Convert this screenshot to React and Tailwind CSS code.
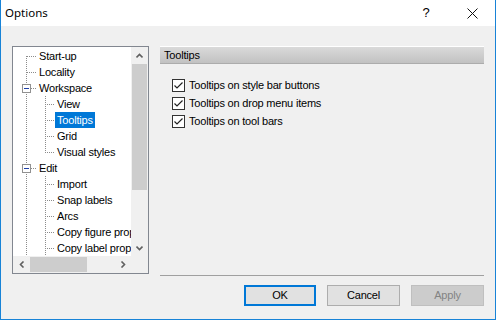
import React from "react";

const rows = [
  { label: "Start-up", level: 0, first: true },
  { label: "Locality", level: 0 },
  { label: "Workspace", level: 0, box: true },
  { label: "View", level: 1 },
  { label: "Tooltips", level: 1, selected: true },
  { label: "Grid", level: 1 },
  { label: "Visual styles", level: 1, last: true },
  { label: "Edit", level: 0, box: true },
  { label: "Import", level: 1 },
  { label: "Snap labels", level: 1 },
  { label: "Arcs", level: 1 },
  { label: "Copy figure prop", level: 1 },
  { label: "Copy label prop", level: 1 },
];

const options = [
  "Tooltips on style bar buttons",
  "Tooltips on drop menu items",
  "Tooltips on tool bars",
];

const dot = "#8c8c8c";

function Connector({ row }) {
  const w = row.level === 0 ? 24 : 42;
  return (
    <svg width={w} height="16" className="shrink-0" shapeRendering="crispEdges">
      {/* root line */}
      <line x1="13.5" y1={row.first ? 8 : 0} x2="13.5" y2="16" stroke={dot} strokeDasharray="1 1" />
      {row.level === 0 && (
        <line x1={row.box ? 18 : 14} y1="8.5" x2="24" y2="8.5" stroke={dot} strokeDasharray="1 1" />
      )}
      {row.box && (
        <>
          <rect x="9.5" y="4.5" width="8" height="8" fill="white" stroke="#919191" />
          <line x1="11" y1="8.5" x2="16" y2="8.5" stroke="#1f3fa8" />
        </>
      )}
      {row.level === 1 && (
        <>
          <line x1="32.5" y1="0" x2="32.5" y2={row.last ? 9 : 16} stroke={dot} strokeDasharray="1 1" />
          <line x1="34" y1="8.5" x2="42" y2="8.5" stroke={dot} strokeDasharray="1 1" />
        </>
      )}
    </svg>
  );
}

function Chevron({ dir }) {
  const pts = {
    up: "0.5,4.5 3.5,1.5 6.5,4.5",
    down: "0.5,1.5 3.5,4.5 6.5,1.5",
    left: "4.5,0.5 1.5,3.5 4.5,6.5",
    right: "1.5,0.5 4.5,3.5 1.5,6.5",
  }[dir];
  const horiz = dir === "left" || dir === "right";
  return (
    <svg width={horiz ? 6 : 7} height={horiz ? 7 : 6}>
      <polyline points={pts} fill="none" stroke="#606060" strokeWidth="1.6" />
    </svg>
  );
}

function Checkbox() {
  return (
    <span className="w-[13px] h-[13px] border border-[#333333] bg-white flex items-center justify-center shrink-0">
      <svg width="11" height="11">
        <polyline points="1.5,5.5 4,8 9.5,2.5" fill="none" stroke="#222222" strokeWidth="1.2" />
      </svg>
    </span>
  );
}

export default function App() {
  return (
    <div
      className="w-[496px] h-[320px] flex flex-col bg-[#f0f0f0] border-x border-b border-[#1883d7] text-black overflow-hidden tracking-[-0.2px]"
      style={{ fontFamily: '"Liberation Sans", Arial, sans-serif' }}
    >
      {/* title bar */}
      <div className="h-[26px] bg-white flex items-center shrink-0 tracking-normal">
        <span className="pl-[4px] text-[11.5px] flex-1" style={{ fontFamily: '"Noto Sans", sans-serif' }}>
          Options
        </span>
        <span className="w-[46px] h-full flex items-center justify-center text-[13px]">?</span>
        <span className="w-[46px] h-full flex items-center justify-center">
          <svg width="11" height="11">
            <path d="M0.5 0.5 L10.5 10.5 M10.5 0.5 L0.5 10.5" stroke="#111" strokeWidth="1" />
          </svg>
        </span>
      </div>

      <div className="flex pt-[20px] pl-[11px] pr-[11px] gap-[11px]">
        {/* tree */}
        <div className="w-[137px] h-[228px] border border-[#828790] bg-white grid grid-cols-[118px_17px] grid-rows-[209px_17px] shrink-0">
          <div className="overflow-hidden pt-px text-[11px] leading-[16px]">
            {rows.map((row) => (
              <div key={row.label} className="flex h-[16px] items-center whitespace-nowrap">
                <Connector row={row} />
                <span className={`px-[2px] ${row.selected ? "bg-[#0078d7] text-white" : ""}`}>{row.label}</span>
              </div>
            ))}
          </div>
          <div className="flex flex-col bg-[#f0f0f0]">
            <div className="h-[17px] flex items-center justify-center">
              <Chevron dir="up" />
            </div>
            <div className="flex-1">
              <div className="h-[126px] bg-[#cdcdcd] mx-px" />
            </div>
            <div className="h-[17px] flex items-center justify-center">
              <Chevron dir="down" />
            </div>
          </div>
          <div className="flex bg-[#f0f0f0]">
            <div className="w-[17px] flex items-center justify-center">
              <Chevron dir="left" />
            </div>
            <div className="flex-1 py-px">
              <div className="w-[57px] h-full bg-[#cdcdcd]" />
            </div>
            <div className="w-[17px] flex items-center justify-center">
              <Chevron dir="right" />
            </div>
          </div>
          <div className="bg-[#f0f0f0]" />
        </div>

        {/* page */}
        <div className="flex-1 h-[230px] flex flex-col border-b border-[#a0a0a0]">
          <div className="h-[18px] border-t border-white bg-gradient-to-b from-[#dadada] to-[#c2c2c2] border-b border-b-[#acacac] flex items-center pl-[4px] text-[11px]">
            Tooltips
          </div>
          <div className="flex flex-col pt-[12px] pl-[12px] text-[11px]">
            {options.map((o) => (
              <label key={o} className="h-[18px] flex items-center gap-[4px]">
                <Checkbox />
                <span>{o}</span>
              </label>
            ))}
          </div>
        </div>
      </div>

      {/* buttons */}
      <div className="flex justify-end gap-[11px] pr-[11px] pt-[9px] text-[11px]">
        <button className="w-[72px] h-[21px] border-2 border-[#0078d7] bg-[#e1e1e1]">OK</button>
        <button className="w-[73px] h-[21px] border border-[#adadad] bg-[#e1e1e1]">Cancel</button>
        <button className="w-[73px] h-[21px] border border-[#bfbfbf] bg-[#cccccc] text-[#838383]">Apply</button>
      </div>
    </div>
  );
}
